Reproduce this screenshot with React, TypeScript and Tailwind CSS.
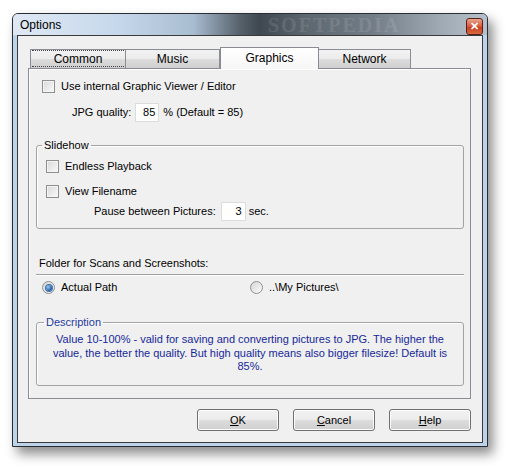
import React from "react";

const font = "font-['Liberation_Sans',Arial,sans-serif]";

function Check() {
  return (
    <span className="block h-[13px] w-[13px] shrink-0 border border-[#8e8f8f] bg-gradient-to-br from-[#d9d9d9] to-[#fafafa] shadow-[inset_0_0_0_1px_#f4f4f4]" />
  );
}

function Radio({ on }: { on?: boolean }) {
  return (
    <span className="flex h-[13px] w-[13px] shrink-0 items-center justify-center rounded-full border border-[#8e8f8f] bg-gradient-to-br from-[#d6d6d6] to-[#fbfbfb]">
      {on ? (
        <span className="block h-[6px] w-[6px] rounded-full bg-[radial-gradient(circle_at_35%_35%,#9cc8f0,#1c5aa3_70%)] shadow-[0_0_0_1px_#3b6fa8]" />
      ) : null}
    </span>
  );
}

function NumBox({ value, className }: { value: string; className: string }) {
  return (
    <span className={`flex h-[19px] items-center justify-end border border-[#dcdcdc] bg-white pr-[3px] ${className}`}>
      {value}
    </span>
  );
}

function Btn({ hot, rest }: { hot: string; rest: string }) {
  return (
    <button
      type="button"
      className="flex h-[22px] w-[82px] items-center justify-center rounded-[3px] border border-[#707070] bg-[linear-gradient(#f2f2f2_0%,#ebebeb_50%,#dddddd_51%,#cfcfcf_100%)] shadow-[inset_0_0_0_1px_#fcfcfc]"
    >
      <span>
        <span className="underline">{hot}</span>
        {rest}
      </span>
    </button>
  );
}

const tabIdle =
  "flex h-[19px] items-center justify-center border border-b-0 border-[#898c95] bg-[linear-gradient(#f2f2f2,#ebebeb_50%,#dddddd_51%,#cfcfcf)] text-[12px]";

export default function App() {
  return (
    <div className={`min-h-screen bg-white pl-[12px] pt-[13px] text-[11px] text-black ${font}`}>
      <div className="flex h-[434px] w-[476px] flex-col rounded-t-[6px] border border-[#2a2e33] bg-[#bcd3ea] shadow-[5px_7px_12px_rgba(0,0,0,0.45)]">
        {/* title bar */}
        <div className="relative flex h-[21px] items-center justify-between overflow-hidden rounded-t-[5px] bg-[linear-gradient(90deg,#dfe9f4_0%,#c6d8eb_22%,#a9bdd1_38%,#55606a_48%,#3f4850_52%,#5d6770_62%,#737d87_76%,#9ea9b4_90%,#b6c1cc_100%)] pl-[7px] pr-[4px]">
          <span className="text-[12px] text-black">Options</span>
          <span className="pointer-events-none absolute left-[255px] top-[1px] select-none font-['Liberation_Serif',serif] text-[20px] font-bold leading-none tracking-[2px] text-white/10">
            SOFTPEDIA
          </span>
          <span className="relative mt-[4px] flex h-[17px] w-[17px] items-center justify-center rounded-[3px] border border-[#5a2018] bg-[linear-gradient(#e9a48f,#d9583b_50%,#c73a1c_51%,#d86a40)] text-[11px] font-bold leading-none text-white">
            ✕
          </span>
        </div>

        {/* client area */}
        <div className="mx-[4px] flex h-[408px] flex-col border border-[#3a3a3a] bg-[#f0f0f0]">
          {/* tabs */}
          <div className="ml-[12px] mt-[11px] flex items-end">
            <div className={`${tabIdle} relative w-[96px]`}>
              <span className="absolute inset-x-[1px] top-[0px] bottom-[1px] border-y border-dotted border-[#444]" />
              Common
            </div>
            <div className={`${tabIdle} w-[94px] border-l-0`}>Music</div>
            <div className="relative z-10 -mb-px flex h-[22px] w-[99px] items-center justify-center border border-b-0 border-[#898c95] bg-[linear-gradient(#ffffff,#f6f6f6)] pb-[2px] text-[12px]">
              Graphics
            </div>
            <div className={`${tabIdle} w-[92px] border-l-0`}>Network</div>
          </div>

          {/* panel */}
          <div className="ml-[10px] flex h-[331px] w-[443px] flex-col border border-[#898c95] bg-[#f0f0f0] shadow-[inset_1px_1px_0_#ffffff]">
            <div className="ml-[13px] mt-[11px] flex h-[13px] items-center gap-[6px]">
              <Check />
              <span>Use internal Graphic Viewer / Editor</span>
            </div>
            <div className="ml-[43px] mt-[10px] flex h-[19px] items-center">
              <span>JPG quality:</span>
              <NumBox value="85" className="ml-[4px] w-[24px]" />
              <span className="ml-[4px]">% (Default = 85)</span>
            </div>

            <fieldset className="ml-[7px] mt-[17px] h-[90px] w-[428px] rounded-[3px] border border-[#a3a3a3] pl-[5px] shadow-[inset_1px_1px_0_#fff]">
              <legend className="px-[2px] leading-[13px]">Slidehow</legend>
              <div className="-ml-[1px] mt-[8px] flex h-[13px] items-center gap-[6px] pl-[5px]">
                <Check />
                <span>Endless Playback</span>
              </div>
              <div className="-ml-[1px] mt-[12px] flex h-[13px] items-center gap-[6px] pl-[5px]">
                <Check />
                <span>View Filename</span>
              </div>
              <div className="ml-[52px] mt-[4px] flex h-[19px] items-center">
                <span>Pause between Pictures:</span>
                <NumBox value="3" className="ml-[5px] w-[25px]" />
                <span className="ml-[3px]">sec.</span>
              </div>
            </fieldset>

            <div className="ml-[10px] mt-[28px] leading-[13px]">Folder for Scans and Screenshots:</div>
            <div className="ml-[7px] mt-[4px] h-px w-[428px] bg-[#a0a0a0] shadow-[0_1px_0_#fff]" />
            <div className="ml-[13px] mt-[6px] flex h-[13px] items-center">
              <div className="flex w-[208px] items-center gap-[6px]">
                <Radio on />
                <span>Actual Path</span>
              </div>
              <div className="flex items-center gap-[6px]">
                <Radio />
                <span>..\My Pictures\</span>
              </div>
            </div>

            <fieldset className="ml-[7px] mt-[22px] h-[70px] w-[428px] rounded-[3px] border border-[#a3a3a3] pl-[7px] shadow-[inset_1px_1px_0_#fff]">
              <legend className="px-[2px] leading-[13px] text-[#1f3a9c]">Description</legend>
              <p className="-ml-[7px] mt-[4px] px-[6px] text-center leading-[13.5px] text-[#16289a]">
                Value 10-100% - valid for saving and converting pictures to JPG. The higher the value, the better the
                quality. But high quality means also bigger filesize! Default is 85%.
              </p>
            </fieldset>
          </div>

          {/* buttons */}
          <div className="ml-[179px] mt-[10px] flex gap-[14px]">
            <Btn hot="O" rest="K" />
            <Btn hot="C" rest="ancel" />
            <Btn hot="H" rest="elp" />
          </div>
        </div>
      </div>
    </div>
  );
}
